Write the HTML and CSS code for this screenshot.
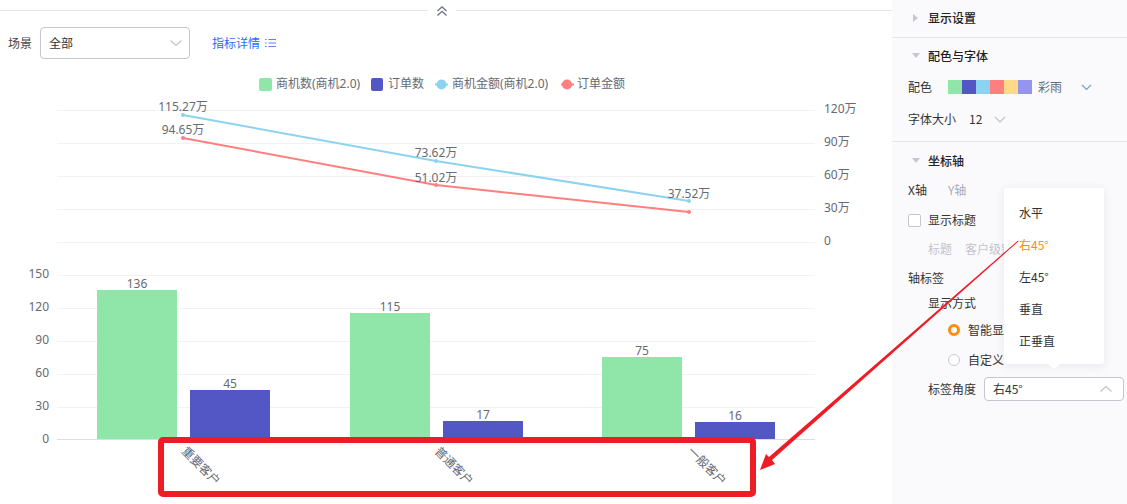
FILE: index.html
```html
<!DOCTYPE html>
<html lang="zh">
<head>
<meta charset="utf-8">
<title>图表设置</title>
<link rel="stylesheet" href="styles.css">
</head>
<body>
<div class="app">
  <main class="main">
    <div class="collapse-bar">
      <span class="rule"></span>
      <svg class="collapse-icon" width="14" height="14" viewBox="0 0 14 14"><path d="M2.500 7 7 2.800 11.500 7M2.500 11.500 7 7.300l4.500 4.200" fill="none" stroke="#6b7280" stroke-width="1.300"/></svg>
      <span class="rule"></span>
    </div>
    <div class="filter">
      <span class="filter-label">场景</span>
      <div class="select select-scene"><span>全部</span>
        <svg width="14" height="8" viewBox="0 0 14 8"><path d="M1.500 1.500 7 6.500l5.500-5" fill="none" stroke="#c0c4cc" stroke-width="1.200"/></svg>
      </div>
      <a class="detail-link">指标详情
        <svg width="11" height="10" viewBox="0 0 11 10"><path d="M0 1.500h1.600M0 5h1.600M0 8.500h1.600M3.500 1.500H11M3.500 5H11M3.500 8.500H11" stroke="#5c84ff" stroke-width="1.100" fill="none"/></svg>
      </a>
    </div>
    <svg class="chart" width="892" height="434" viewBox="0 70 892 434">
      <g class="grid">
        <path d="M57 110.500H815M57 143.500H815M57 176.500H815M57 209.500H815M57 242.500H815M57 275.500H815M57 308.500H815M57 341.500H815M57 374.500H815M57 407.500H815"/>
      </g>
      <path class="axis" d="M57 439.500H815"/>
      <g class="legend">
        <rect x="259" y="78" width="13" height="13" rx="2" fill="#8fe6a8"/><text x="276" y="88">商机数(商机2.0)</text>
        <rect x="371" y="78" width="12" height="13" rx="2" fill="#5356c5"/><text x="388" y="88">订单数</text>
        <path d="M435 84.500h13" stroke="#8bd3f0" stroke-width="2"/><circle cx="441.500" cy="84.500" r="5" fill="#8bd3f0"/><text x="452" y="88">商机金额(商机2.0)</text>
        <path d="M561 84.500h13" stroke="#ff7f7f" stroke-width="2"/><circle cx="567" cy="84.500" r="5" fill="#ff7f7f"/><text x="577" y="88">订单金额</text>
      </g>
      <g class="bars">
        <rect x="97" y="290" width="80" height="149" fill="#8fe6a8"/>
        <rect x="190" y="390" width="80" height="49" fill="#5356c5"/>
        <rect x="350" y="313" width="80" height="126" fill="#8fe6a8"/>
        <rect x="443" y="421" width="80" height="18" fill="#5356c5"/>
        <rect x="602" y="357" width="80" height="82" fill="#8fe6a8"/>
        <rect x="695" y="422" width="80" height="17" fill="#5356c5"/>
      </g>
      <g class="series">
        <polyline points="183,115 436,161 689,201" stroke="#8bd3f0"/>
        <polyline points="183,138 436,185 689,212" stroke="#ff7f7f"/>
        <g fill="#8bd3f0"><circle cx="183" cy="115" r="2"/><circle cx="436" cy="161" r="2"/><circle cx="689" cy="201" r="2"/></g>
        <g fill="#ff7f7f"><circle cx="183" cy="138" r="2"/><circle cx="436" cy="185" r="2"/><circle cx="689" cy="212" r="2"/></g>
      </g>
      <g class="labels-mid">
        <text x="183" y="111">115.27万</text>
        <text x="183" y="134">94.65万</text>
        <text x="436" y="157">73.62万</text>
        <text x="436" y="182">51.02万</text>
        <text x="689" y="198">37.52万</text>
        <text x="137" y="288">136</text>
        <text x="230" y="388">45</text>
        <text x="390" y="311">115</text>
        <text x="483" y="419">17</text>
        <text x="642" y="355">75</text>
        <text x="735" y="420">16</text>
      </g>
      <g class="labels-left">
        <text x="49" y="278">150</text>
        <text x="49" y="311">120</text>
        <text x="49" y="344">90</text>
        <text x="49" y="377">60</text>
        <text x="49" y="410">30</text>
        <text x="49" y="443">0</text>
      </g>
      <g class="labels-right">
        <text x="824" y="113">120万</text>
        <text x="824" y="146">90万</text>
        <text x="824" y="179">60万</text>
        <text x="824" y="212">30万</text>
        <text x="824" y="245">0</text>
      </g>
      <g class="labels-x">
        <text transform="translate(181 452) rotate(45)">重要客户</text>
        <text transform="translate(434 452) rotate(45)">普通客户</text>
        <text transform="translate(687 452) rotate(45)">一般客户</text>
      </g>
    </svg>
  </main>

  <aside class="side">
    <section class="group group-first">
      <h3 class="group-head"><i class="tri tri-right"></i>显示设置</h3>
    </section>
    <section class="group group-color">
      <h3 class="group-head"><i class="tri tri-down"></i>配色与字体</h3>
      <div class="row row-palette">
        <span class="row-label">配色</span>
        <span class="palette"><i class="c1"></i><i class="c2"></i><i class="c3"></i><i class="c4"></i><i class="c5"></i><i class="c6"></i></span>
        <span class="muted-dark">彩雨</span>
        <svg class="palette-arrow" width="11" height="7" viewBox="0 0 11 7"><path d="M1 1l4.500 4.500L10 1" fill="none" stroke="#7a9cc6" stroke-width="1.200"/></svg>
      </div>
      <div class="row row-font">
        <span class="row-label">字体大小</span>
        <span class="font-value">12</span>
        <svg width="12" height="7" viewBox="0 0 12 7"><path d="M1 1l5 5 5-5" fill="none" stroke="#c0c4cc" stroke-width="1.200"/></svg>
      </div>
    </section>
    <section class="group group-axis">
      <h3 class="group-head"><i class="tri tri-down"></i>坐标轴</h3>
      <div class="row tabs"><span class="row-label">X轴</span><span class="tab-off">Y轴</span></div>
      <div class="row check-row"><i class="checkbox"></i><span class="row-label">显示标题</span></div>
      <div class="row title-row"><span>标题</span><span>客户级别</span></div>
      <div class="row axis-label"><span class="row-label">轴标签</span></div>
      <div class="row mode-row"><span class="row-label">显示方式</span></div>
      <div class="row radio-row radio-a"><i class="radio radio-on"></i><span class="row-label">智能显示</span></div>
      <div class="row radio-row radio-b"><i class="radio"></i><span class="row-label">自定义</span></div>
      <div class="row angle-row">
        <span class="row-label">标签角度</span>
        <div class="select select-angle"><span>右45°</span>
          <svg width="14" height="8" viewBox="0 0 14 8"><path d="M1.500 6.500 7 1.500l5.500 5" fill="none" stroke="#c0c4cc" stroke-width="1.200"/></svg>
        </div>
      </div>
    </section>
    <ul class="menu">
      <li>水平</li>
      <li class="active">右45°</li>
      <li>左45°</li>
      <li>垂直</li>
      <li>正垂直</li>
    </ul>
  </aside>

  <svg class="annotation" width="1127" height="504" viewBox="0 0 1127 504">
    <rect x="161" y="440" width="592" height="54" rx="2" fill="none" stroke="#ee1c25" stroke-width="6"/>
    <polygon points="1018,240.500 1018.600,241.300 772,460 775,464 760,470 766,454 769,457" fill="#ee1c25"/>
  </svg>
</div>
</body>
</html>
```
FILE: styles.css
```css
* { box-sizing: border-box; }
html, body { margin: 0; padding: 0; }
body {
  width: 1127px;
  height: 504px;
  overflow: hidden;
  background: #fff;
  font-family: "Noto Sans CJK SC", "Noto Sans", sans-serif;
  font-size: 12px;
  line-height: 18px;
  color: #333;
}
.app { position: relative; display: flex; width: 1127px; height: 504px; }
.main { width: 892px; flex: none; }

.collapse-bar { display: flex; align-items: center; height: 20px; gap: 7px; padding-top: 1px; }
.rule { flex: 1; height: 1px; background: #e3e3ea; }
.rule:first-child { flex: none; width: 428px; }
.collapse-icon { flex: none; }

.filter { display: flex; align-items: center; height: 32px; margin-top: 7px; padding-left: 8px; }
.filter-label { width: 32px; color: #444; }
.select {
  display: flex;
  align-items: center;
  justify-content: space-between;
  border: 1px solid #c4c6d0;
  border-radius: 4px;
  background: #fff;
  color: #333;
}
.select-scene { width: 150px; height: 32px; padding: 0 6px 0 8px; }
.detail-link { display: flex; align-items: center; gap: 5px; margin-left: 22px; color: #1f6bff; }

.chart { display: block; margin-top: 11px; }
.chart text { font-family: "Noto Sans", "Noto Sans CJK SC", sans-serif; font-size: 12px; fill: #666a73; }
.grid path { stroke: #f2f2f4; stroke-width: 1; fill: none; }
.axis { stroke: #dcdce4; stroke-width: 1; fill: none; }
.series polyline { fill: none; stroke-width: 2; }
.labels-mid text { text-anchor: middle; }
.labels-left text { text-anchor: end; }

.side { position: relative; flex: 1; background: #fafafc; padding-top: 1px; }
.group { border-bottom: 1px solid #e5e5ea; }
.group-first { height: 37px; }
.group-color { height: 104px; }
.group-axis { border-bottom: 0; }
.group-head {
  display: flex;
  align-items: center;
  height: 33px;
  margin: 0;
  padding-left: 20px;
  font-size: 12px;
  font-weight: 500;
  color: #222;
}
.tri { display: block; width: 0; height: 0; margin-right: 11px; }
.tri-right { border-left: 5px solid #c5c8d2; border-top: 4px solid transparent; border-bottom: 4px solid transparent; margin-left: 1px; margin-right: 10px; }
.tri-down { border-top: 5px solid #c5c8d2; border-left: 4px solid transparent; border-right: 4px solid transparent; margin-right: 8px; }
.row { display: flex; align-items: center; padding-left: 16px; color: #333; }
.row-label { color: #333; }

.group-color .group-head { height: 35px; }
.row-palette { height: 24px; margin-top: 2px; }
.palette { display: flex; margin-left: 16px; flex: none; }
.palette i { display: block; flex: none; width: 14px; height: 14px; }
.c1 { background: #8fe6a8; }
.c2 { background: #5356c5; }
.c3 { background: #8bd3f0; }
.c4 { background: #ff7f7f; }
.c5 { background: #ffd98a; }
.c6 { background: #9595ee; }
.muted-dark { margin-left: 6px; color: #666a73; }
.palette-arrow { margin-left: 19px; }
.row-font { height: 24px; margin-top: 8px; }
.font-value { margin-left: 13px; margin-right: 12px; }

.group-axis .group-head { height: 37px; }
.tabs { height: 20px; margin-top: 1px; gap: 21px; }
.tab-off { color: #a8abb5; }
.check-row { height: 20px; margin-top: 10px; gap: 8px; }
.checkbox { display: block; width: 13px; height: 13px; border: 1px solid #c4c6d0; border-radius: 2px; background: #fff; margin-right: -1px; }
.title-row { height: 20px; margin-top: 9px; padding-left: 36px; gap: 13px; color: #c2c4cc; white-space: nowrap; }
.axis-label { height: 20px; margin-top: 9px; }
.mode-row { height: 20px; margin-top: 5px; padding-left: 36px; }
.radio-row { height: 20px; padding-left: 56px; gap: 8px; white-space: nowrap; }
.radio-a { margin-top: 7px; }
.radio-b { margin-top: 10px; }
.radio { display: block; width: 12px; height: 12px; border: 1px solid #c8cad2; border-radius: 50%; background: #fff; }
.radio-on { border: 3px solid #ff8a0c; }
.angle-row { height: 24px; margin-top: 7px; padding-left: 36px; gap: 8px; }
.select-angle { width: 140px; height: 24px; padding: 0 10px 0 8px; }

.menu {
  position: absolute;
  left: 112px;
  top: 188px;
  width: 100px;
  height: 176px;
  margin: 0;
  padding: 9px 0 0;
  list-style: none;
  background: #fff;
  border-radius: 3px;
  box-shadow: 0 2px 10px rgba(60, 60, 90, .1);
  color: #333;
}
.menu::after {
  content: "";
  position: absolute;
  left: 44px;
  bottom: -5px;
  border-top: 5px solid #fff;
  border-left: 6px solid transparent;
  border-right: 6px solid transparent;
}
.menu li { height: 32px; line-height: 32px; padding-left: 15px; }
.menu .active { color: #ff8a0c; }

.annotation { position: absolute; left: 0; top: 0; pointer-events: none; }
```
